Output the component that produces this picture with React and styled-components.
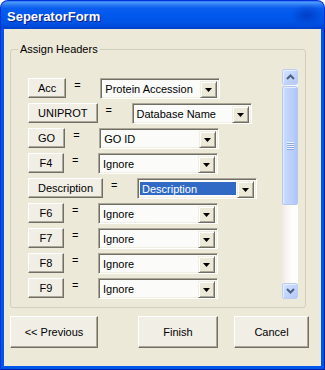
import React from 'react';
import styled, { createGlobalStyle } from 'styled-components';

const Global = createGlobalStyle`
  html, body { margin: 0; padding: 0; background: #ffffff; }
  body { font-family: "Liberation Sans", Arial, sans-serif; font-size: 11px; }
  * { box-sizing: border-box; }
`;

const Window = styled.div`
  width: 325px;
  height: 370px;
  display: flex;
  flex-direction: column;
`;

const TitleBar = styled.div`
  height: 29px;
  flex: none;
  display: flex;
  align-items: center;
  padding: 2px 0 0 6px;
  border-radius: 8px 8px 0 0;
  border: 1px solid #0831D9;
  border-bottom: none;
  background:
    radial-gradient(ellipse 16px 11px at 306px 14px, rgba(0, 40, 170, 0.55), rgba(0, 40, 170, 0)),
    linear-gradient(to bottom, #2C7CF4 0%, #4A98FA 6%, #2A78F3 14%, #0A5EEE 26%, #0058EC 50%, #0054E6 75%, #004ADA 90%, #0040C8 100%);
`;

const Title = styled.span`
  color: #ffffff;
  font: bold 13px "Liberation Sans", Arial, sans-serif;
  text-shadow: 1px 1px #0A1A8C;
`;

const Frame = styled.div`
  flex: 1;
  display: flex;
  padding: 0 4px 4px;
  background: #0055EA;
  box-shadow: inset 1px 0 #0831D9, inset -1px 0 #001EA0, inset 0 -1px #001EA0;
`;

const Client = styled.div`
  flex: 1;
  display: flex;
  flex-direction: column;
  background: #ECE9D8;
  padding: 14px 12px 0 6px;
`;

const Group = styled.fieldset`
  width: 296px;
  margin: 0;
  padding: 0 7px 8px 5px;
  border: 1px solid #D0D0BF;
  border-radius: 3px;
  min-width: 0;
`;

const Legend = styled.legend`
  font: 11px "Liberation Sans", Arial, sans-serif;
  line-height: 13px;
  color: #000000;
  padding: 0 2px;
  margin-left: 2px;
`;

const Panel = styled.div`
  height: 230px;
  margin-top: 13px;
  display: flex;
  overflow: hidden;
`;

const Rows = styled.div`
  flex: 1;
  display: flex;
  flex-direction: column;
  gap: 4px;
  padding: 9px 0 0 12px;
`;

const Row = styled.div`
  display: flex;
  align-items: flex-start;
  height: 21px;
  flex: none;
`;

const RaisedButton = styled.button`
  font: 11px "Liberation Sans", Arial, sans-serif;
  color: #000000;
  background: #F0EEE5;
  border: 1px solid;
  border-color: #FFFFFF #716F64 #716F64 #FFFFFF;
  box-shadow: inset -1px -1px #ACA899;
  border-radius: 0;
  margin: 0;
  padding: 0 9px 1px;
  display: flex;
  align-items: center;
  justify-content: center;
  cursor: default;
`;

const HeaderButton = styled(RaisedButton)`
  height: 20px;
  min-width: 36px;
`;

const Eq = styled.span`
  width: 34px;
  padding-left: 8px;
  line-height: 14px;
  flex: none;
`;

const Combo = styled.div`
  width: 120px;
  height: 21px;
  flex: none;
  display: flex;
  padding: 2px;
  background: #FBFBF9;
  border: 1px solid;
  border-color: #ACA899 #FFFFFF #FFFFFF #ACA899;
  box-shadow: inset 1px 1px #716F64, inset -1px -1px #F1EFE2;
`;

const ComboValue = styled.div`
  flex: 1;
  margin: ${p => (p.$selected ? '1px 1px 1px 0' : '0')};
  padding-left: ${p => (p.$selected ? '2px' : '2px')};
  line-height: ${p => (p.$selected ? '15px' : '17px')};
  background: ${p => (p.$selected ? '#316AC5' : 'transparent')};
  color: ${p => (p.$selected ? '#FFFFFF' : '#000000')};
  white-space: nowrap;
  overflow: hidden;
`;

const DropButton = styled.div`
  width: 17px;
  height: 17px;
  flex: none;
  display: flex;
  align-items: center;
  justify-content: center;
  padding-top: 1px;
  background: #ECE9D8;
  border: 1px solid;
  border-color: #F1EFE2 #716F64 #716F64 #F1EFE2;
  box-shadow: inset 1px 1px #FFFFFF, inset -1px -1px #ACA899;
`;

const Scrollbar = styled.div`
  width: 16px;
  flex: none;
  display: flex;
  flex-direction: column;
  background: linear-gradient(to right, #F2E8E4 0%, #F8F4F2 30%, #FDFDFB 60%, #FEFEFC 100%);
`;

const ScrollButton = styled.div`
  height: 16px;
  flex: none;
  display: flex;
  align-items: center;
  justify-content: center;
  border: 1px solid #BCCDF6;
  border-radius: 2px;
  background: linear-gradient(135deg, #D6E2FE 0%, #C3D4FC 50%, #B5C9F8 100%);
  box-shadow: inset 1px 1px #E6EEFF;
`;

const Track = styled.div`
  flex: 1;
  display: flex;
  flex-direction: column;
  padding-top: 1px;
`;

const Thumb = styled.div`
  height: 119px;
  flex: none;
  display: flex;
  align-items: center;
  justify-content: center;
  border: 1px solid #B3C7F5;
  border-radius: 2px;
  background: linear-gradient(to right, #D2DFFD 0%, #C2D3FC 30%, #BACDFA 70%, #AEC4F7 100%);
  box-shadow: inset 1px 1px #E4ECFF;
`;

const Grip = styled.div`
  width: 7px;
  height: 8px;
  background: repeating-linear-gradient(to bottom, #EEF3FF 0px, #EEF3FF 1px, #8CA8EC 1px, #8CA8EC 2px);
`;

const Footer = styled.div`
  display: flex;
  margin-top: 8px;
`;

const FooterButton = styled(RaisedButton)`
  height: 32px;
  width: ${p => p.$w}px;
  margin-left: ${p => p.$ml || '0'};
`;

const Arrow = () => (
  <svg width="7" height="4" viewBox="0 0 7 4">
    <polygon points="0,0 7,0 3.5,4" fill="#000" />
  </svg>
);

const Chevron = ({ down }) => (
  <svg width="9" height="6" viewBox="0 0 9 6">
    <polyline
      points={down ? '1,1 4.5,4.5 8,1' : '1,5 4.5,1.5 8,5'}
      fill="none"
      stroke="#4D6185"
      strokeWidth="2"
    />
  </svg>
);

const rows = [
  { label: 'Acc', value: 'Protein Accession' },
  { label: 'UNIPROT', value: 'Database Name' },
  { label: 'GO', value: 'GO ID' },
  { label: 'F4', value: 'Ignore' },
  { label: 'Description', value: 'Description', selected: true },
  { label: 'F6', value: 'Ignore' },
  { label: 'F7', value: 'Ignore' },
  { label: 'F8', value: 'Ignore' },
  { label: 'F9', value: 'Ignore' },
];

export default function App() {
  return (
    <Window>
      <Global />
      <TitleBar>
        <Title>SeperatorForm</Title>
      </TitleBar>
      <Frame>
        <Client>
          <Group>
            <Legend>Assign Headers</Legend>
            <Panel>
              <Rows>
                {rows.map(r => (
                  <Row key={r.label}>
                    <HeaderButton>{r.label}</HeaderButton>
                    <Eq>=</Eq>
                    <Combo>
                      <ComboValue $selected={r.selected}>{r.value}</ComboValue>
                      <DropButton>
                        <Arrow />
                      </DropButton>
                    </Combo>
                  </Row>
                ))}
              </Rows>
              <Scrollbar>
                <ScrollButton>
                  <Chevron />
                </ScrollButton>
                <Track>
                  <Thumb>
                    <Grip />
                  </Thumb>
                </Track>
                <ScrollButton>
                  <Chevron down />
                </ScrollButton>
              </Scrollbar>
            </Panel>
          </Group>
          <Footer>
            <FooterButton $w={88}>&lt;&lt; Previous</FooterButton>
            <FooterButton $w={80} $ml="40px">Finish</FooterButton>
            <FooterButton $w={75} $ml="auto">Cancel</FooterButton>
          </Footer>
        </Client>
      </Frame>
    </Window>
  );
}
